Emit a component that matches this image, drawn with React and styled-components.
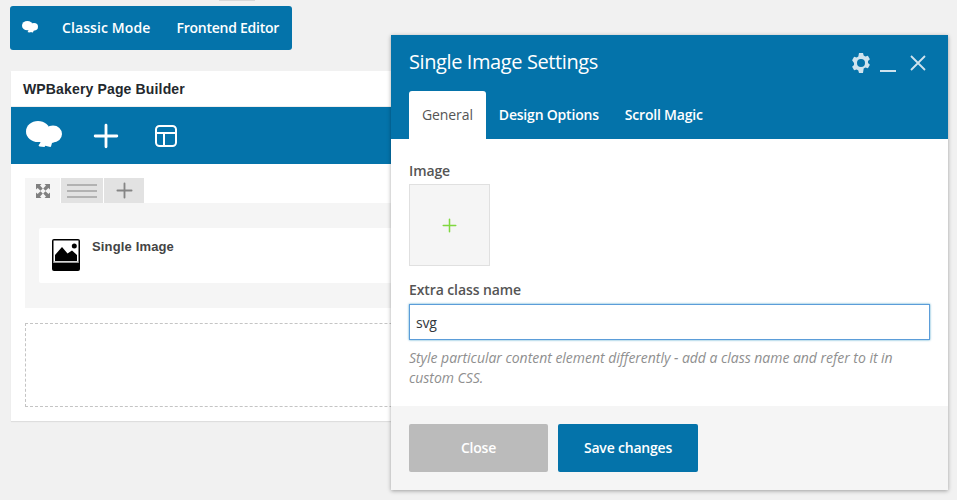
import React from 'react'
import styled, { createGlobalStyle } from 'styled-components'

const BLUE = '#0473aa'

const GlobalStyle = createGlobalStyle`
  html, body { margin: 0; padding: 0; background: #f1f1f1; }
  body { width: 957px; height: 500px; overflow: hidden; font-family: "Open Sans", sans-serif; }
`

function Cloud({ size }) {
  return (
    <svg width={size} height={size * 0.75} viewBox="0 0 36 27" fill="#fff">
      <ellipse cx="12" cy="10.5" rx="12" ry="10.5" />
      <ellipse cx="27" cy="13" rx="9" ry="8.5" />
      <path d="M8 12h24l-4 9-2 1-1 3.5-.7.5-5-1.2-.8 1.2-5-.5-1-1 2-3z" />
    </svg>
  )
}

function Plus({ size, color, weight }) {
  return (
    <svg width={size} height={size} viewBox="0 0 24 24" stroke={color} strokeWidth={weight} strokeLinecap="round">
      <path d="M12 2v20M2 12h20" />
    </svg>
  )
}

function LayoutIcon() {
  return (
    <svg width="24" height="24" viewBox="0 0 24 24" fill="none" stroke="#fff" strokeWidth="2">
      <rect x="2" y="2" width="20" height="20" rx="3.5" />
      <path d="M2 9h20M10 9v13" />
    </svg>
  )
}

function ExpandIcon() {
  return (
    <svg width="14" height="14" viewBox="0 0 14 14" fill="#808080">
      <path d="M0 0h5.5L4 1.5 6.8 4.5 4.5 6.8 1.6 4 0 5.5z" />
      <path d="M14 0H8.5L10 1.5 7.2 4.5l2.3 2.3L12.4 4 14 5.5z" />
      <path d="M0 14h5.5L4 12.5l2.8-3-2.3-2.3L1.6 10 0 8.5z" />
      <path d="M14 14H8.5l1.5-1.5-2.8-3 2.3-2.3 2.9 2.8L14 8.5z" />
    </svg>
  )
}

function LinesIcon() {
  return (
    <svg width="30" height="14" viewBox="0 0 30 14" stroke="#a3a3a3" strokeWidth="1.6">
      <path d="M0 1h30M0 7h30M0 13h30" />
    </svg>
  )
}

function ImageIcon() {
  return (
    <svg width="28" height="32" viewBox="0 0 28 32">
      <rect width="28" height="32" rx="2" fill="#000" />
      <rect x="1.5" y="1.5" width="25" height="22.5" fill="#fff" />
      <rect x="2" y="22.6" width="24" height="1.4" fill="#999" />
      <circle cx="22.3" cy="7" r="2.5" fill="#000" />
      <path d="M3 22v-6l7-8 5.5 6.5 4.5-3 5 4.5V22z" fill="#000" />
    </svg>
  )
}

function GearIcon() {
  return (
    <svg width="20" height="20" viewBox="0 0 20 20">
      <path
        fill="#cfe3ee"
        fillRule="evenodd"
        d="M8 0h4l.7 2.6 1.6.9 2.6-.7 2 3.4-1.9 1.9v1.8l1.9 1.9-2 3.4-2.6-.7-1.6.9L12 20H8l-.7-2.6-1.6-.9-2.6.7-2-3.4 1.9-1.9V10.1L1.1 7.2l2-3.4 2.6.7 1.6-.9zM10 6a4 4 0 1 0 0 8 4 4 0 0 0 0-8z"
      />
    </svg>
  )
}

function CloseIcon() {
  return (
    <svg width="16" height="16" viewBox="0 0 16 16" stroke="#cfe3ee" strokeWidth="1.8">
      <path d="M1 1l14 14M15 1L1 15" />
    </svg>
  )
}

export default function App() {
  return (
    <Page>
      <GlobalStyle />
      <TopStub />
      <ModeBar>
        <ModeLogo>
          <Cloud size={16} />
        </ModeLogo>
        <ModeLink $tracking={0.1}>Classic Mode</ModeLink>
        <ModeLink $tracking={-0.25}>Frontend Editor</ModeLink>
      </ModeBar>

      <BuilderPanel>
        <PanelTitle>WPBakery Page Builder</PanelTitle>
        <BuilderToolbar>
          <Cloud size={36} />
          <Plus size={26} color="#fff" weight={2.6} />
          <LayoutIcon />
        </BuilderToolbar>
        <Canvas>
          <RowTabs>
            <RowTab $active $width={35}><ExpandIcon /></RowTab>
            <RowTab $width={42}><LinesIcon /></RowTab>
            <RowTab $width={40}><Plus size={17} color="#858585" weight={2.6} /></RowTab>
          </RowTabs>
          <Row>
            <ElementCard>
              <ImageIcon />
              <ElementName>Single Image</ElementName>
            </ElementCard>
          </Row>
          <DropZone />
        </Canvas>
      </BuilderPanel>

      <Modal>
        <ModalHead>
          <TitleRow>
            <ModalTitle>Single Image Settings</ModalTitle>
            <HeadActions>
              <GearIcon />
              <MinimizeBar />
              <CloseIcon />
            </HeadActions>
          </TitleRow>
          <Tabs>
            <Tab $active>General</Tab>
            <Tab>Design Options</Tab>
            <Tab>Scroll Magic</Tab>
          </Tabs>
        </ModalHead>
        <ModalBody>
          <FieldLabel>Image</FieldLabel>
          <ImagePicker>
            <Plus size={15} color="#7fd83f" weight={2.4} />
          </ImagePicker>
          <FieldLabel $spaced>Extra class name</FieldLabel>
          <ClassInput readOnly value="svg" />
          <HelpText>
            Style particular content element differently - add a class name and refer to it in custom CSS.
          </HelpText>
        </ModalBody>
        <ModalFooter>
          <FooterButton $muted>Close</FooterButton>
          <FooterButton>Save changes</FooterButton>
        </ModalFooter>
      </Modal>
    </Page>
  )
}

const Page = styled.div`
  position: relative;
  width: 957px;
  height: 500px;
  padding: 6px 0 0 10px;
  box-sizing: border-box;
`

const TopStub = styled.div`
  position: absolute;
  top: 0;
  left: 219px;
  width: 36px;
  height: 1px;
  background: #d8d8d8;
`

const ModeBar = styled.div`
  display: flex;
  align-items: center;
  width: 282px;
  height: 44px;
  padding-bottom: 2px;
  background: ${BLUE};
  border-radius: 3px;
  color: #fff;
  box-sizing: border-box;
`

const ModeLogo = styled.div`
  display: flex;
  flex: none;
  width: 52px;
  padding-left: 12px;
  box-sizing: border-box;
`

const ModeLink = styled.span`
  flex: none;
  margin-right: 26px;
  font-size: 14px;
  font-weight: 600;
  letter-spacing: ${(p) => p.$tracking}px;
  white-space: nowrap;
`

const BuilderPanel = styled.div`
  width: 700px;
  height: 350px;
  margin: 21px 0 0 1px;
  background: #fff;
  box-shadow: 0 1px 1px rgba(0, 0, 0, 0.08);
`

const PanelTitle = styled.div`
  height: 35px;
  padding-left: 12px;
  font-family: "Liberation Sans", sans-serif;
  font-size: 14px;
  font-weight: 700;
  line-height: 37px;
  letter-spacing: 0.15px;
  color: #23282d;
  border-bottom: 1px solid #eee;
`

const BuilderToolbar = styled.div`
  display: flex;
  align-items: center;
  gap: 31px;
  height: 57px;
  padding-left: 15px;
  background: ${BLUE};
  svg:first-child { margin-top: -2px; }
  svg:last-child { margin-left: 4px; }
`

const Canvas = styled.div`
  padding: 14px 14px 0;
`

const RowTabs = styled.div`
  display: flex;
  gap: 1px;
  height: 25px;
`

const RowTab = styled.div`
  display: flex;
  align-items: center;
  justify-content: center;
  width: ${(p) => p.$width}px;
  background: ${(p) => (p.$active ? '#f5f5f5' : '#e2e2e2')};
`

const Row = styled.div`
  height: 105px;
  padding: 25px 14px 0;
  background: #f5f5f5;
  box-sizing: border-box;
`

const ElementCard = styled.div`
  display: flex;
  gap: 12px;
  height: 55px;
  padding: 11px 13px 0;
  background: #fff;
  border-radius: 2px;
  box-sizing: border-box;
`

const ElementName = styled.span`
  font-family: "Liberation Sans", sans-serif;
  font-size: 13px;
  font-weight: 700;
  line-height: 15px;
  letter-spacing: 0.15px;
  color: #444;
`

const DropZone = styled.div`
  height: 84px;
  margin-top: 15px;
  border: 1px dashed #c4c4c4;
  box-sizing: border-box;
`

const Modal = styled.div`
  position: absolute;
  top: 35px;
  left: 391px;
  display: flex;
  flex-direction: column;
  width: 557px;
  height: 455px;
  background: #fff;
  box-shadow: 0 1px 4px rgba(0, 0, 0, 0.35);
`

const ModalHead = styled.div`
  height: 104px;
  padding: 0 18px;
  background: ${BLUE};
  color: #fff;
`

const TitleRow = styled.div`
  display: flex;
  align-items: center;
  justify-content: space-between;
  height: 56px;
`

const ModalTitle = styled.h2`
  margin: 0 0 3px;
  font-size: 20px;
  font-weight: 400;
  letter-spacing: -0.4px;
`

const HeadActions = styled.div`
  display: flex;
  align-items: center;
  gap: 9px;
  margin-right: 4px;
`

const MinimizeBar = styled.span`
  align-self: flex-end;
  width: 16px;
  height: 2px;
  margin: 0 5px 1px 0;
  background: #cfe3ee;
`

const Tabs = styled.div`
  display: flex;
`

const Tab = styled.div`
  height: 48px;
  padding: 0 13px;
  font-size: 14px;
  font-weight: ${(p) => (p.$active ? 400 : 600)};
  line-height: 48px;
  letter-spacing: ${(p) => (p.$active ? -0.1 : -0.2)}px;
  border-radius: 3px 3px 0 0;
  color: ${(p) => (p.$active ? '#555' : '#fff')};
  background: ${(p) => (p.$active ? '#fff' : 'transparent')};
`

const ModalBody = styled.div`
  flex: 1;
  padding: 22px 18px 0;
`

const FieldLabel = styled.div`
  margin-top: ${(p) => (p.$spaced ? '14px' : '0')};
  margin-bottom: ${(p) => (p.$spaced ? '4px' : '3px')};
  font-size: 14px;
  font-weight: 600;
  line-height: 20px;
  letter-spacing: -0.1px;
  color: #555;
`

const ImagePicker = styled.div`
  display: flex;
  align-items: center;
  justify-content: center;
  width: 81px;
  height: 82px;
  background: #f5f5f5;
  border: 1px solid #e0e0e0;
  box-sizing: border-box;
`

const ClassInput = styled.input`
  display: block;
  width: 521px;
  height: 36px;
  padding: 0 6px;
  font-family: "Open Sans", sans-serif;
  font-size: 14px;
  letter-spacing: -0.2px;
  color: #32373c;
  background: #fff;
  border: 1px solid #5b9dd9;
  box-shadow: 0 0 2px rgba(30, 140, 190, 0.8);
  border-radius: 0;
  outline: none;
  box-sizing: border-box;
`

const HelpText = styled.p`
  margin: 8px 0 0;
  font-size: 14px;
  font-style: italic;
  line-height: 20px;
  letter-spacing: -0.03px;
  color: #8f8f8f;
  width: 500px;
`

const ModalFooter = styled.div`
  display: flex;
  gap: 10px;
  height: 84px;
  padding: 18px;
  background: #f5f5f5;
  box-sizing: border-box;
`

const FooterButton = styled.div`
  display: flex;
  align-items: center;
  justify-content: center;
  width: ${(p) => (p.$muted ? 139 : 140)}px;
  height: 48px;
  padding-bottom: 2px;
  font-size: 14px;
  font-weight: 600;
  letter-spacing: -0.2px;
  border-radius: 2px;
  color: #fff;
  background: ${(p) => (p.$muted ? '#bbb' : BLUE)};
  box-sizing: border-box;
`
